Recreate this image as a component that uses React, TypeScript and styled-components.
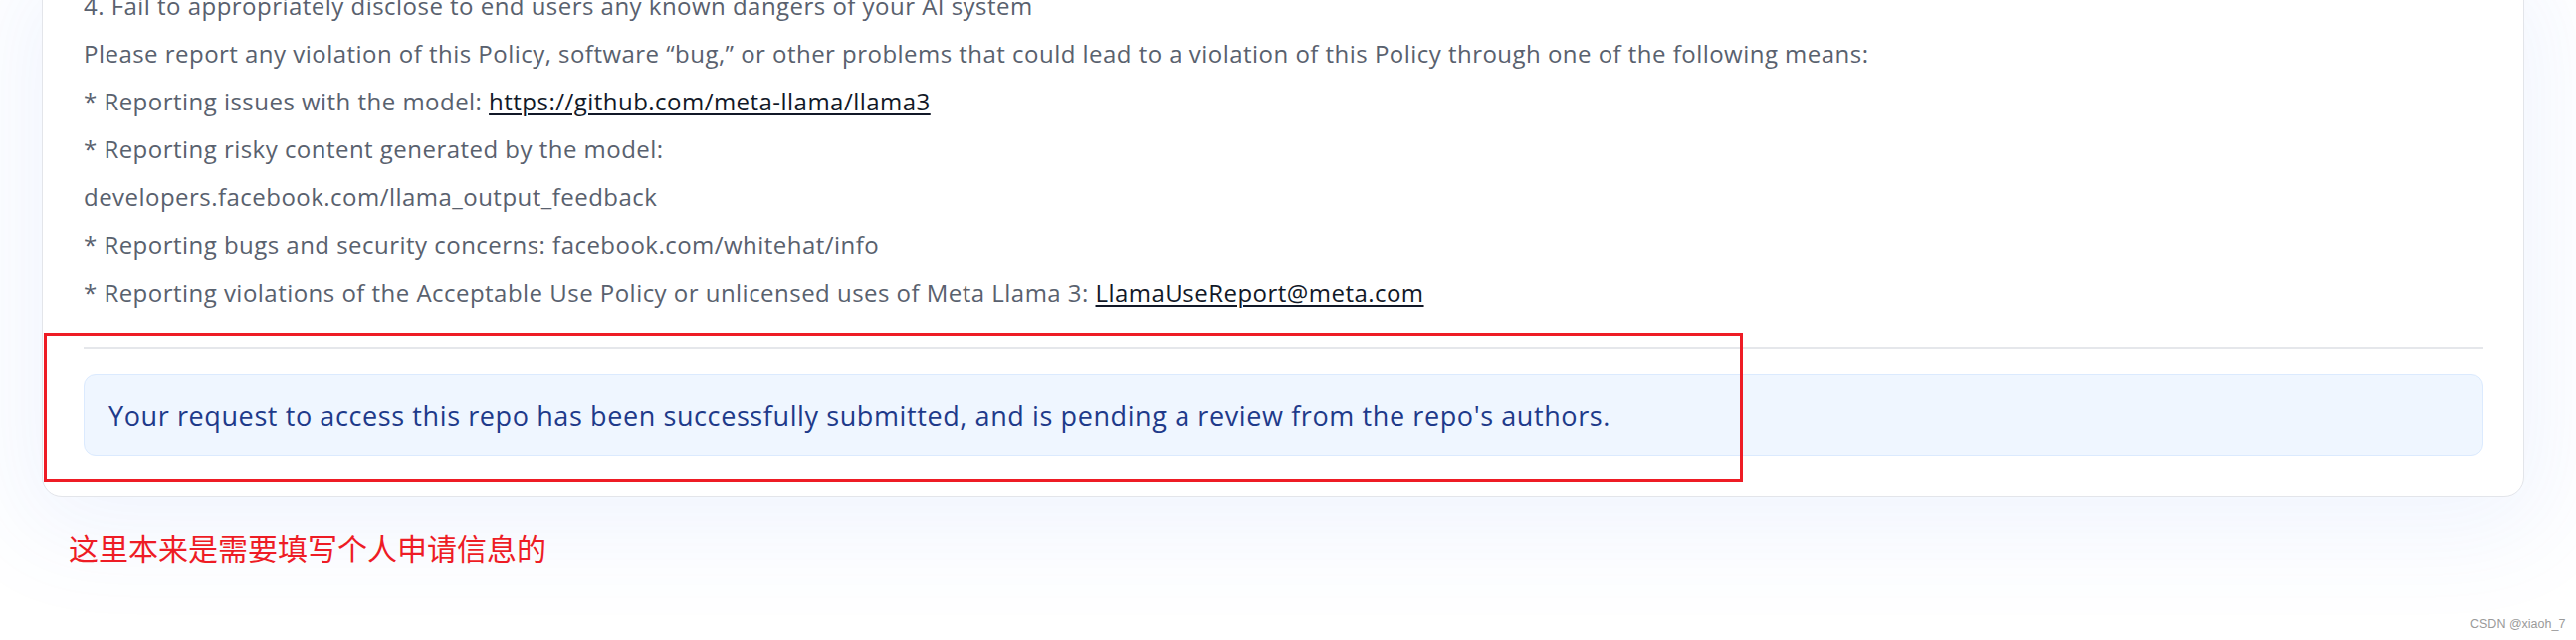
import styled, { createGlobalStyle } from "styled-components";

const GlobalStyle = createGlobalStyle`
  html, body {
    margin: 0;
    padding: 0;
    background: #ffffff;
    overflow: hidden;
  }
`;

const policyLines = [
  { text: "4. Fail to appropriately disclose to end users any known dangers of your AI system" },
  {
    text: "Please report any violation of this Policy, software “bug,” or other problems that could lead to a violation of this Policy through one of the following means:",
  },
  { text: "* Reporting issues with the model: ", link: "https://github.com/meta-llama/llama3" },
  { text: "* Reporting risky content generated by the model:" },
  { text: "developers.facebook.com/llama_output_feedback" },
  { text: "* Reporting bugs and security concerns: facebook.com/whitehat/info" },
  {
    text: "* Reporting violations of the Acceptable Use Policy or unlicensed uses of Meta Llama 3: ",
    link: "LlamaUseReport@meta.com",
  },
];

export default function App() {
  return (
    <Page>
      <GlobalStyle />
      <Card>
        <Policy>
          {policyLines.map((line, i) => (
            <Line key={i}>
              {line.text}
              {line.link && <Link>{line.link}</Link>}
            </Line>
          ))}
        </Policy>
        <Divider />
        <Notice>
          Your request to access this repo has been successfully submitted, and is pending a review from the repo's authors.
        </Notice>
      </Card>
      <Note>这里本来是需要填写个人申请信息的</Note>

      <Highlight />
      <Watermark>CSDN @xiaoh_7</Watermark>
    </Page>
  );
}

const Page = styled.div`
  position: relative;
  width: 2588px;
  height: 643px;
  overflow: hidden;
  background: #ffffff;
`;

const Card = styled.div`
  box-sizing: border-box;
  width: 2494px;
  margin: -19px 0 0 42px;
  padding: 0 40px 40px 41px;
  background: #ffffff;
  border: 1.5px solid #e3e5ea;
  border-radius: 0 0 20px 20px;
  box-shadow: 0 16px 100px 24px rgba(70, 120, 235, 0.075);
`;

const Policy = styled.div`
  display: flex;
  flex-direction: column;
`;

const Line = styled.div`
  font-family: "Open Sans", "Noto Sans", sans-serif;
  font-size: 24px;
  line-height: 48px;
  letter-spacing: 0.47px;
  color: #59616e;
  white-space: nowrap;
`;

const Link = styled.span`
  color: #111827;
  text-decoration: underline;
  text-decoration-thickness: 1.5px;
  text-underline-offset: 3px;
`;

const Divider = styled.div`
  height: 2px;
  margin-top: 31px;
  background: #e5e7eb;
`;

const Notice = styled.div`
  box-sizing: border-box;
  height: 82px;
  margin-top: 25px;
  padding: 0 24px;
  display: flex;
  align-items: center;
  background: #eff6ff;
  border: 1.5px solid #dbeafe;
  border-radius: 12px;
  font-family: "Open Sans", "Noto Sans", sans-serif;
  font-size: 27px;
  letter-spacing: 0.6px;
  color: #1e3a8a;
  white-space: nowrap;
`;

const Note = styled.div`
  margin: 31px 0 0 69px;
  font-family: "Noto Sans CJK SC", sans-serif;
  font-size: 30px;
  line-height: 40px;
  color: #ee1c25;
`;

const Highlight = styled.div`
  position: absolute;
  left: 44px;
  top: 335px;
  width: 1707px;
  height: 149px;
  box-sizing: border-box;
  border: 3px solid #ee1c25;
  pointer-events: none;
`;

const Watermark = styled.div`
  position: absolute;
  left: 2482px;
  top: 618px;
  font-family: "Liberation Sans", sans-serif;
  font-size: 12.5px;
  line-height: 18px;
  color: #9a9a9a;
`;
